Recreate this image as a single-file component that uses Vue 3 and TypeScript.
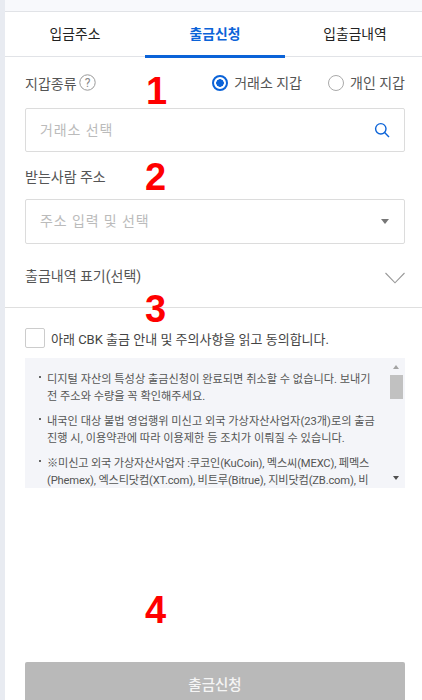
<script setup lang="ts">
const tabs: string[] = ['입금주소', '출금신청', '입출금내역']
const notes: string[] = [
  '디지털 자산의 특성상 출금신청이 완료되면 취소할 수 없습니다. 보내기 전 주소와 수량을 꼭 확인해주세요.',
  '내국인 대상 불법 영업행위 미신고 외국 가상자산사업자(23개)로의 출금 진행 시, 이용약관에 따라 이용제한 등 조치가 이뤄질 수 있습니다.',
  '※미신고 외국 가상자산사업자 :쿠코인(KuCoin), 멕스씨(MEXC), 페멕스(Phemex), 엑스티닷컴(XT.com), 비트루(Bitrue), 지비닷컴(ZB.com), 비',
]
</script>

<template>
  <div class="page">
    <div class="topbar"></div>
    <nav class="tabs">
      <div v-for="(t, i) in tabs" :key="t" class="tab" :class="{ active: i === 1 }">{{ t }}</div>
    </nav>
    <main class="form">
      <div class="row-head">
        <div class="label">지갑종류
          <svg class="help" width="17" height="17" viewBox="0 0 17 17">
            <circle cx="8.5" cy="8.5" r="7.7" fill="none" stroke="#999" stroke-width="1" />
            <text x="8.5" y="12.7" text-anchor="middle" font-size="12" fill="#888" font-family="Roboto, sans-serif">?</text>
          </svg>
        </div>
        <div class="radios">
          <span class="radio"><i class="dot on"></i>거래소 지갑</span>
          <span class="radio"><i class="dot"></i>개인 지갑</span>
        </div>
      </div>
      <div class="field f1">
        <span class="ph">거래소 선택</span>
        <svg width="16" height="16" viewBox="0 0 16 16" fill="none" stroke="#0b63d8" stroke-width="1.4">
          <circle cx="6.8" cy="6.8" r="5.2" />
          <path d="M10.6 10.6 15 15" />
        </svg>
      </div>
      <div class="label second">받는사람 주소</div>
      <div class="field f2">
        <span class="ph wide">주소 입력 및 선택</span>
        <i class="caret"></i>
      </div>
      <div class="memo">
        <span class="label">출금내역 표기(선택)</span>
        <svg width="20" height="12" viewBox="0 0 20 12" fill="none" stroke="#999" stroke-width="1.1">
          <path d="M0.5 1 10 10.8 19.5 1" />
        </svg>
      </div>
    </main>
    <div class="divider"></div>
    <section class="lower">
      <label class="agree"><i class="check"></i>아래 CBK 출금 안내 및 주의사항을 읽고 동의합니다.</label>
      <div class="notice">
        <ul class="notes">
          <li v-for="n in notes" :key="n">{{ n }}</li>
        </ul>
        <div class="scroll">
          <i class="up"></i>
          <b class="thumb"></b>
          <i class="down"></i>
        </div>
      </div>
      <div class="spacer"></div>
      <button class="submit" type="button">출금신청</button>
    </section>
    <span class="num n1">1</span>
    <span class="num n2">2</span>
    <span class="num n3">3</span>
    <span class="num n4">4</span>
  </div>
</template>

<style>
html, body { margin: 0; background: #fff; overflow: hidden; }
</style>

<style scoped>
.page {
  position: relative;
  box-sizing: border-box;
  width: 422px;
  height: 700px;
  overflow: hidden;
  display: flex;
  flex-direction: column;
  background: #fff;
  border-left: 5px solid #e8ebf1;
  font-family: Roboto, "Noto Sans CJK KR", sans-serif;
  color: #444;
}
.topbar { height: 11px; flex: none; background: #f8f9fc; border-bottom: 1px solid #e1e3e7; }
.tabs { display: flex; height: 44px; flex: none; border-bottom: 1px solid #e1e3e7; }
.tab {
  position: relative;
  flex: none;
  width: 140px;
  text-align: center;
  font-size: 13.8px;
  line-height: 45px;
  color: #222;
}
.tab.active { color: #0b63d8; font-weight: 700; }
.tab.active::after {
  content: "";
  position: absolute;
  left: 0;
  right: 0;
  top: 43px;
  height: 3px;
  background: #0b63d8;
}
.form { padding: 0 17px 0 20px; flex: none; }
.row-head { display: flex; justify-content: space-between; align-items: center; height: 51px; }
.label { font-size: 14px; color: #555; display: flex; align-items: center; gap: 2px; }
.radios { display: flex; gap: 6px 26px; }
.radio { display: flex; align-items: center; gap: 6px; font-size: 14px; line-height: 20px; color: #555; }
.dot {
  box-sizing: border-box;
  width: 16px;
  height: 16px;
  border-radius: 50%;
  border: 1px solid #aaa;
  display: block;
}
.dot.on {
  border: 2px solid #0b63d8;
  background: radial-gradient(circle, #0b63d8 0 3.5px, #fff 4px);
}
.field {
  box-sizing: border-box;
  border: 1px solid #dcdcdc;
  border-radius: 2px;
  display: flex;
  align-items: center;
  justify-content: space-between;
  padding: 0 14px;
}
.f1 { height: 44px; }
.f2 { height: 45px; }
.ph { font-size: 14px; color: #bbb; letter-spacing: 0.9px; margin-top: -2px; }
.ph.wide { letter-spacing: 0.9px; margin-top: -3px; }
.second { margin-top: 14px; height: 22px; margin-bottom: 11px; line-height: 22px; }
.caret {
  width: 0;
  height: 0;
  border: 4.5px solid transparent;
  border-top: 5px solid #777;
  border-bottom: 0;
  margin-right: 1px;
}
.memo {
  display: flex;
  justify-content: space-between;
  align-items: center;
  height: 63px;
  padding-bottom: 1px;
  box-sizing: border-box;
  color: #555;
}
.memo svg { margin-top: 5px; }
.divider { height: 1px; flex: none; background: #dfdfdf; }
.lower { flex: 1; display: flex; flex-direction: column; padding: 0 17px 0 20px; min-height: 0; }
.agree {
  display: flex;
  align-items: center;
  gap: 6px;
  height: 20px;
  margin-top: 20px;
  font-size: 13px;
  color: #444;
}
.check {
  box-sizing: border-box;
  width: 20px;
  height: 20px;
  border: 1px solid #ccc;
  border-radius: 2px;
  display: block;
}
.notice {
  height: 130px;
  margin-top: 10px;
  flex: none;
  background: #f4f5f9;
  display: flex;
  overflow: hidden;
}
.notes {
  flex: 1;
  min-width: 0;
  list-style: none;
  margin: 0;
  padding: 14px 13px 0 22px;
  font-size: 11.2px;
  line-height: 16.8px;
  color: #555;
}
.notes li { position: relative; margin-bottom: 8.4px; }
.notes li:nth-child(3) { letter-spacing: -0.17px; }
.notes li:last-child { margin-bottom: 0; }
.notes li::before {
  content: "";
  position: absolute;
  left: -8px;
  top: 4px;
  width: 2px;
  height: 2px;
  background: #666;
}
.scroll {
  width: 17px;
  flex: none;
  display: flex;
  flex-direction: column;
  align-items: center;
  position: relative;
}
.thumb { position: absolute; top: 17px; left: 2px; width: 13px; height: 24px; background: #c1c1c1; }
.up, .down { position: absolute; width: 0; height: 0; border: 3.5px solid transparent; left: 5px; }
.up { top: 7px; border-top: 0; border-bottom: 4px solid #a3a3a3; }
.down { bottom: 8px; border-bottom: 0; border-top: 4px solid #505050; }
.spacer { flex: 1; }
.submit {
  flex: none;
  height: 38px;
  border: 0;
  border-radius: 2px 2px 0 0;
  background: #b9b9b9;
  color: #f5f5f5;
  font: 500 14.5px Roboto, "Noto Sans CJK KR", sans-serif;
  padding: 5px 0 0;
}
.num {
  position: absolute;
  color: #f00;
  font: 700 38px/1 "Liberation Sans", sans-serif;
}
.n1 { left: 141px; top: 72px; }
.n2 { left: 140px; top: 158px; }
.n3 { left: 140px; top: 290px; }
.n4 { left: 140px; top: 591px; }
</style>
